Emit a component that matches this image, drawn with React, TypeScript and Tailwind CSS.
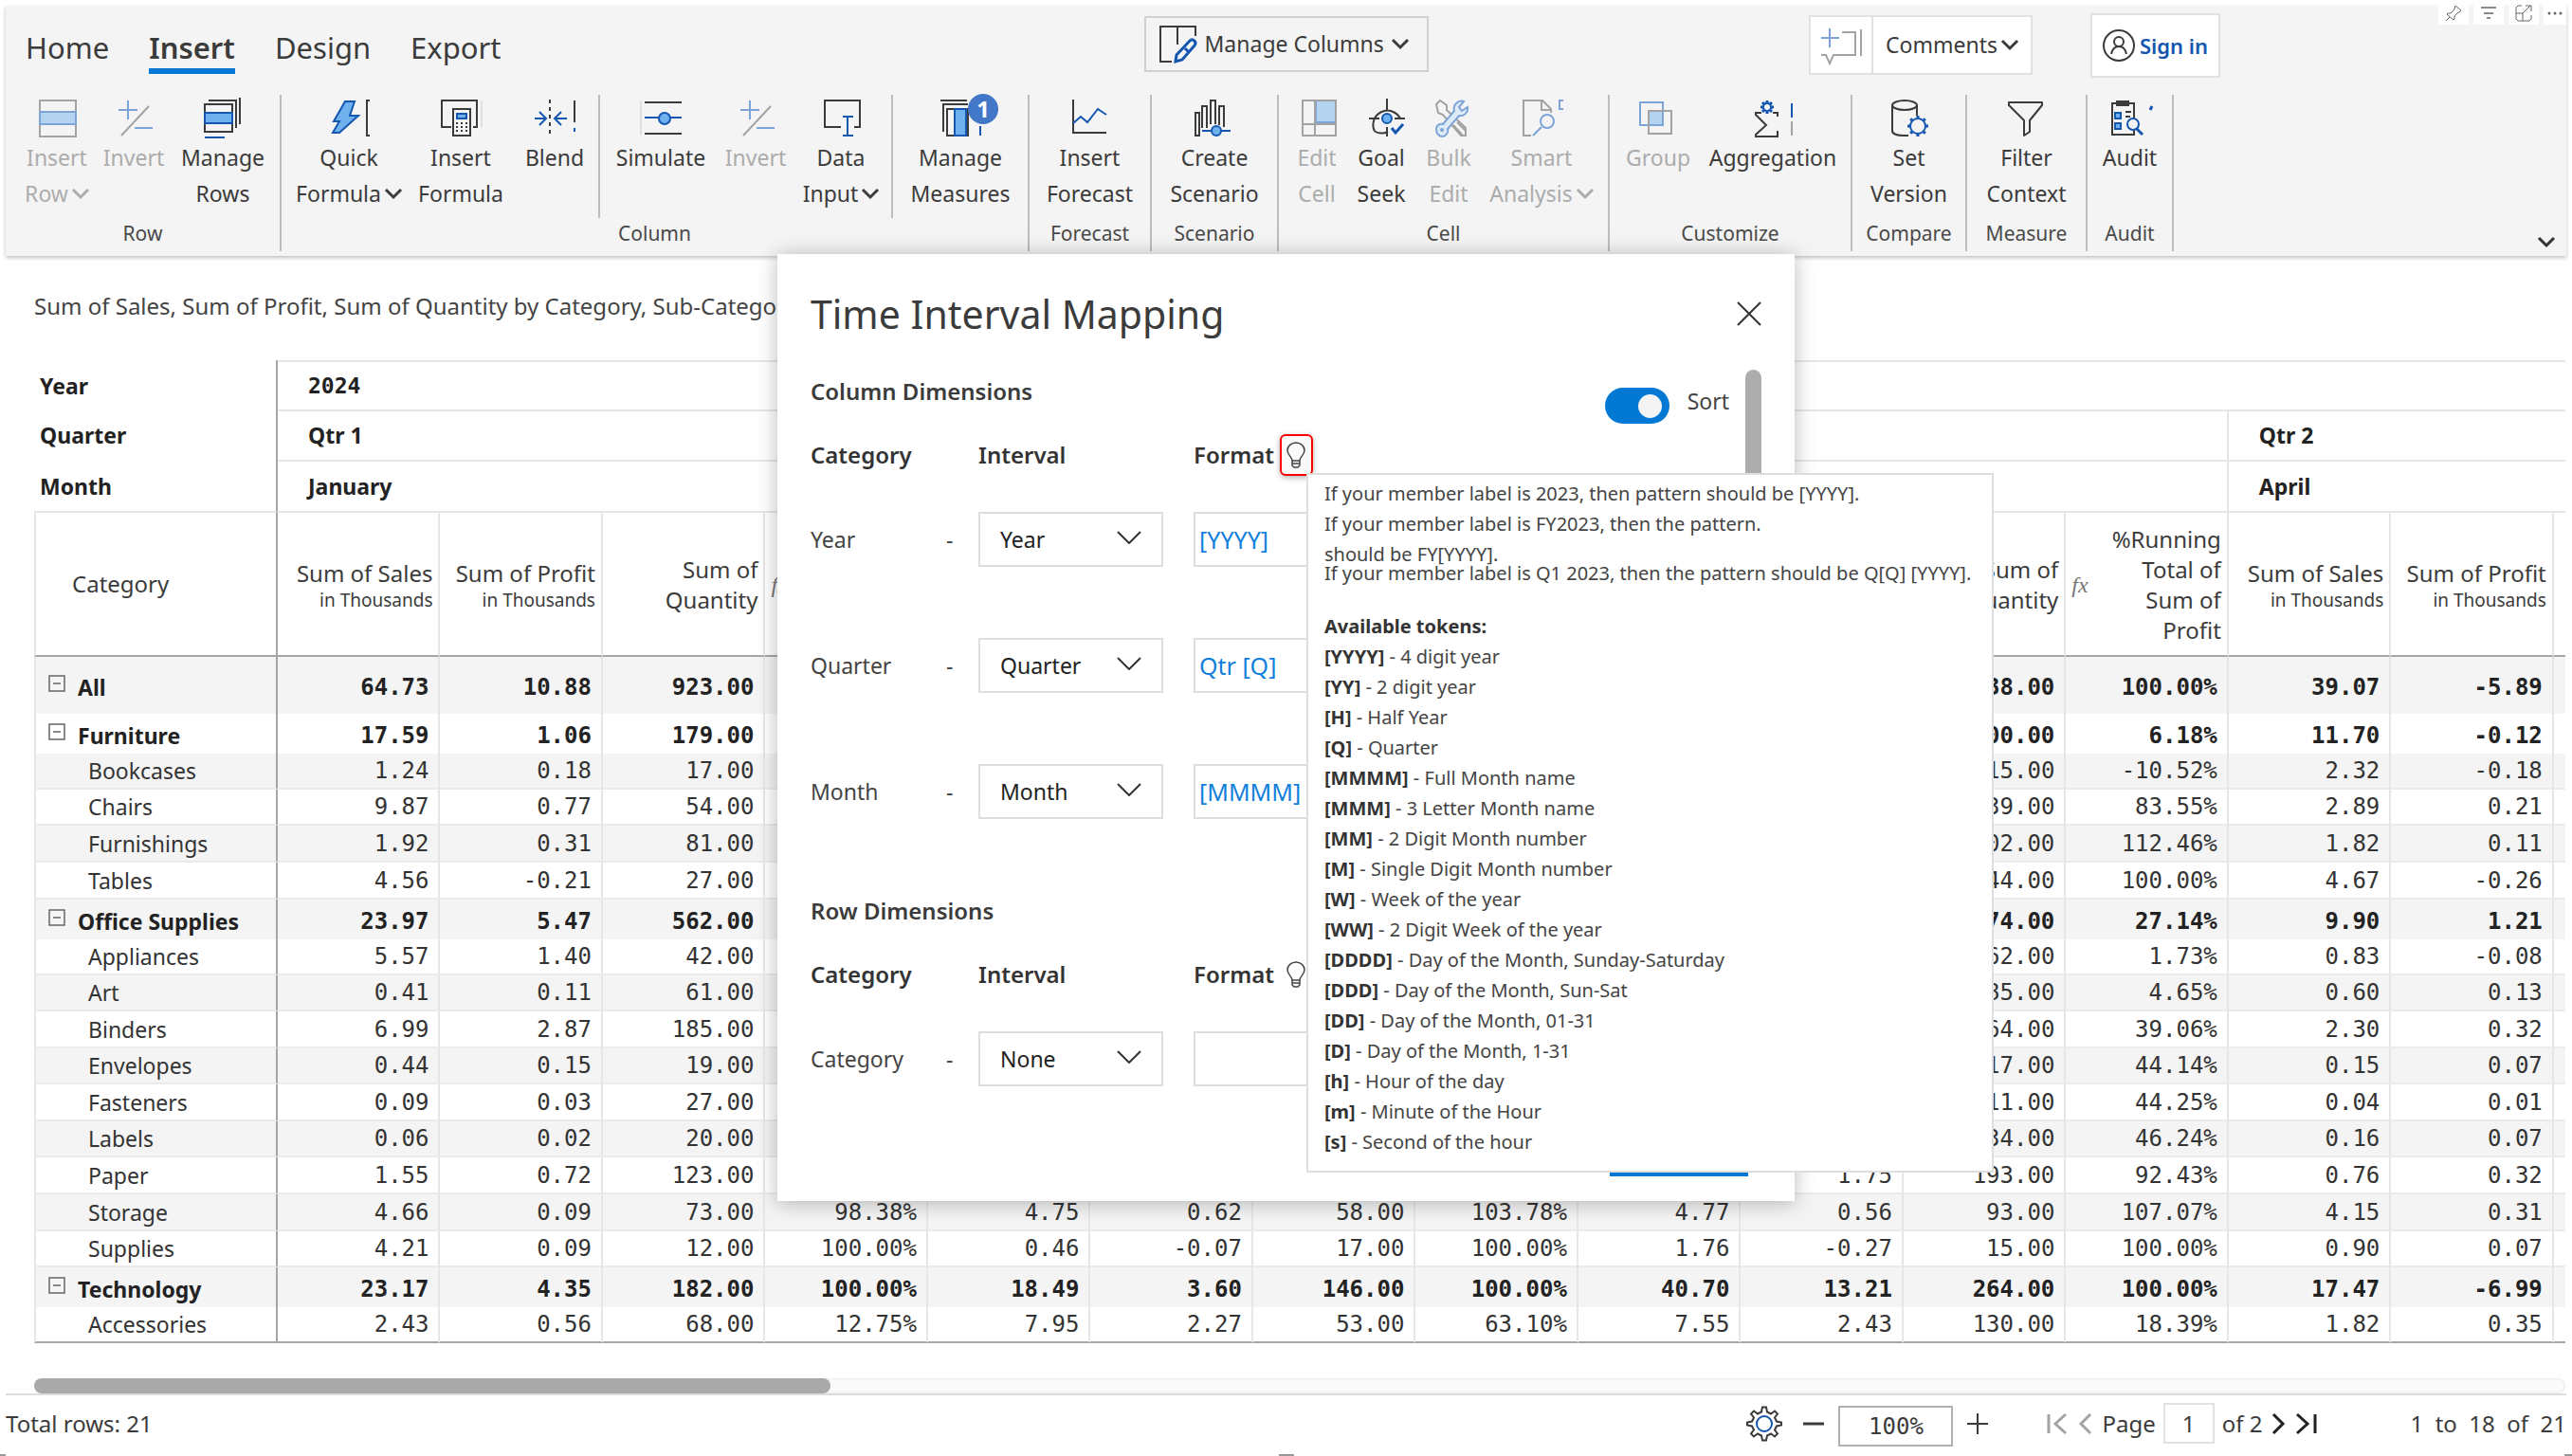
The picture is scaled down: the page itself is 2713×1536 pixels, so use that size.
import React, { useState } from "react";

const INK = "#3b3b3b";
const BLUE = "#1557b0";
const SKY = "#6fb1ee";
const GRAY = "#a3a3a3";
const PALE = "#7da4d6";
const PALE_FILL = "#b3d3f0";

function Icon({ children, width = 40, height = 40 }: { children: React.ReactNode; width?: number; height?: number }) {
  return (
    <svg
      width={width}
      height={height}
      viewBox={`0 0 ${width} ${height}`}
      fill="none"
      stroke={INK}
      strokeWidth="2"
      className="block shrink-0 overflow-visible"
      aria-hidden="true"
    >
      {children}
    </svg>
  );
}

function Chevron() {
  return (
    <svg
      width="18"
      height="11"
      viewBox="0 0 18 11"
      fill="none"
      stroke="currentColor"
      strokeWidth="3"
      className="inline-block shrink-0 overflow-visible"
      aria-hidden="true"
    >
      <path d="M1 1l8 8 8-8" />
    </svg>
  );
}

function Gear({ cx, cy, r, stroke = BLUE, teeth = 8 }: { cx: number; cy: number; r: number; stroke?: string; teeth?: number }) {
  const spokes = Array.from({ length: teeth }, (_, i) => {
    const a = (i * 2 * Math.PI) / teeth;
    return `M${cx + r * Math.cos(a)} ${cy + r * Math.sin(a)}L${cx + (r + 3) * Math.cos(a)} ${cy + (r + 3) * Math.sin(a)}`;
  }).join("");
  return (
    <g stroke={stroke}>
      <circle cx={cx} cy={cy} r={r} />
      <path d={spokes} strokeWidth="3" />
    </g>
  );
}

const insertRowIcon = (
  <Icon>
    <g stroke={GRAY}>
      <rect x="2" y="1" width="38" height="38" fill="#f4f4f4" />
      <rect x="2" y="13" width="38" height="13" fill={PALE_FILL} stroke={PALE} />
    </g>
  </Icon>
);
const invertIcon = (
  <Icon>
    <path d="M14 1v20M4 11h20M21 30h19" stroke={PALE} />
    <path d="M36 7L7 38" stroke={GRAY} />
  </Icon>
);
const manageRowsIcon = (
  <Icon>
    <path d="M5 1h29v29M38-2v28" />
    <rect x="1" y="5" width="29" height="29" />
    <rect x="1" y="14" width="29" height="11" fill={SKY} stroke={BLUE} />
    <path d="M1 40h21" stroke={BLUE} />
  </Icon>
);
const boltIcon = (
  <Icon>
    <path d="M16 2h10l-5 15h9L10 35H3l7-12H4z" fill={SKY} stroke={BLUE} />
    <path d="M42 1h-3v37h3" />
  </Icon>
);
const insertFormulaIcon = (
  <Icon>
    <path d="M10 29H0V1h37v28h-4" />
    <rect x="12" y="10" width="18" height="28" />
    <rect x="16" y="15" width="10" height="5" fill={SKY} stroke={BLUE} />
    <path d="M15 25h12M15 29h12M15 33h12" strokeDasharray="2 3" />
    <path d="M42 1v29" stroke="#cccccc" strokeWidth="1" />
  </Icon>
);
const blendIcon = (
  <Icon>
    <path d="M15 0v40" strokeDasharray="4 4" />
    <path d="M-1 20h11M4 13l7 7-7 7M33 20H20M27 13l-7 7 7 7" stroke={BLUE} />
    <path d="M41 1v23" />
    <path d="M41 30v4" stroke={BLUE} />
  </Icon>
);
const simulateIcon = (
  <Icon>
    <path d="M3 3h39M3 36h39" />
    <path d="M3 19h39" stroke={BLUE} />
    <circle cx="24" cy="20" r="6" fill={SKY} stroke={BLUE} />
    <path d="M-1 1v37" stroke="#cccccc" strokeWidth="1" />
  </Icon>
);
const dataInputIcon = (
  <Icon>
    <path d="M20 29H3V1h37v28h-6" />
    <path d="M27 19v19M22 18h11M22 38h11" stroke={BLUE} />
  </Icon>
);
const manageMeasuresIcon = (
  <Icon>
    <path d="M-1 1h28M2 34V5h26M6 38V10h22v28z" />
    <rect x="14" y="10" width="12" height="28" fill={SKY} stroke={BLUE} />
    <path d="M41 28v10" stroke={BLUE} />
  </Icon>
);
const forecastIcon = (
  <Icon>
    <path d="M2 0v35h35" />
    <path d="M2 25l8-7 7 6 11-14 9 6" stroke={BLUE} />
  </Icon>
);
const scenarioIcon = (
  <Icon>
    <path d="M0 38V14h4v24zM7 30V7h5v23M16 26V1h5v25M25 27V7h5v22" />
    <path d="M7 33h30" stroke={BLUE} />
    <circle cx="22" cy="33" r="5" fill={SKY} stroke={BLUE} />
  </Icon>
);
const editCellIcon = (
  <Icon>
    <rect x="19" y="1" width="21" height="23" fill={PALE_FILL} stroke={PALE} />
    <path d="M40 1H5v37h35zM18 1v37M5 26h35" stroke={GRAY} />
  </Icon>
);
const goalIcon = (
  <Icon>
    <path d="M13 33.500A15 15 0 1 1 40 20M27 34a15 15 0 0 1-14-.5M26-1v12M26 29v10M7 20h11M34 20h11" />
    <circle cx="26" cy="20" r="5" fill={SKY} stroke={BLUE} />
    <path d="M31 30l4 5 8-9" stroke={BLUE} strokeWidth="3" />
  </Icon>
);
const bulkIcon = (
  <Icon>
    <g stroke={GRAY}>
      <path d="M7 5l4-4 7 5 0 5 20 19v8h-5L14 16l-5-2z" fill="#f4f4f4" />
      <path d="M25 27l10 11M29 24l9 9" />
    </g>
    <path
      d="M7 31c0-4 4-6 7-5l12-14c-2-6 4-12 10-10l-5 6 3 4 6-4c1 6-4 10-9 9L19 31c1 4-2 8-6 8-3 0-6-3-6-8z"
      fill="#dfeaf7"
      stroke={PALE}
    />
    <circle cx="13" cy="32" r="1" stroke={PALE} />
  </Icon>
);
const smartIcon = (
  <Icon>
    <path d="M9 38H1V1h20l9 9v4M20 1v10h10" stroke={GRAY} />
    <path d="M20 29l-9 9M43 1h-4v9h4" stroke={PALE} />
    <circle cx="26" cy="23" r="7" stroke={PALE} />
  </Icon>
);
const groupIcon = (
  <Icon>
    <rect x="10" y="12" width="15" height="14" fill={PALE_FILL} stroke="none" />
    <rect x="1" y="3" width="24" height="24" stroke={PALE} />
    <rect x="10" y="12" width="24" height="24" stroke={GRAY} />
  </Icon>
);
const aggregationIcon = (
  <Icon>
    <path d="M25 18v-4h-5M8 14H2v2l11 11L2 37v2h23v-6" />
    <Gear cx={14} cy={8} r={4} />
    <path d="M40 4v15" stroke={BLUE} />
    <path d="M40 23v15" stroke={GRAY} />
  </Icon>
);
const versionIcon = (
  <Icon>
    <ellipse cx="15" cy="6" rx="13" ry="5" />
    <path d="M2 6v27c0 3 5 5 13 5h4M28 6v11" />
    <Gear cx={29} cy={28} r={8} />
  </Icon>
);
const filterIcon = (
  <Icon>
    <path d="M1 3h35v3L23 22v12l-6 4V22L1 6z" strokeLinejoin="round" />
  </Icon>
);
const auditIcon = (
  <Icon>
    <path d="M24 20V4H1v33h23v-5" />
    <rect x="6" y="2" width="12" height="4" fill={INK} />
    <path d="M15 13h6M15 18h5" />
    <rect x="4" y="14" width="6" height="6" fill={SKY} stroke={BLUE} />
    <rect x="4" y="25" width="6" height="6" fill={SKY} stroke={BLUE} />
    <circle cx="23" cy="26" r="6" stroke={BLUE} />
    <path d="M27 31l6 6M41 11l2-4" stroke={BLUE} strokeWidth="3" />
  </Icon>
);

type Tool = { width: string; icon: React.ReactNode; lines: string[]; menu?: boolean; off?: boolean; badge?: string };

function ToolButton({ tool }: { tool: Tool }) {
  return (
    <button
      type="button"
      disabled={tool.off}
      className={`${tool.width} flex shrink-0 flex-col items-center pt-[5px] text-[23px] leading-[38px] whitespace-nowrap ${
        tool.off ? "text-[#acacac]" : "text-[#3b3b3b]"
      }`}
    >
      <span className="relative mb-0.5">
        {tool.icon}
        {tool.badge && (
          <span className="absolute -top-1.5 left-7 flex size-8 items-center justify-center rounded-full bg-[#4377c8] text-2xl font-bold text-white">
            {tool.badge}
          </span>
        )}
      </span>
      {tool.lines.map((line, i) => (
        <span key={line} className="flex items-center gap-1">
          {line}
          {tool.menu && i === tool.lines.length - 1 && <Chevron />}
        </span>
      ))}
    </button>
  );
}

const groups: { name: string; width: string; sections: { className: string; tools: Tool[] }[] }[] = [
  {
    name: "Row",
    width: "w-[291px]",
    sections: [
      {
        className: "w-full pl-[14px]",
        tools: [
          { width: "w-[80px]", icon: insertRowIcon, lines: ["Insert", "Row"], menu: true, off: true },
          { width: "w-[82px]", icon: invertIcon, lines: ["Invert"], off: true },
          { width: "w-[106px]", icon: manageRowsIcon, lines: ["Manage", "Rows"] },
        ],
      },
    ],
  },
  {
    name: "Column",
    width: "w-[789px]",
    sections: [
      {
        className: "w-[336px] border-r-2 pl-[7px]",
        tools: [
          { width: "w-[128px]", icon: boltIcon, lines: ["Quick", "Formula"], menu: true },
          { width: "w-[108px]", icon: insertFormulaIcon, lines: ["Insert", "Formula"] },
          { width: "w-[90px]", icon: blendIcon, lines: ["Blend"] },
        ],
      },
      {
        className: "w-[309px] border-r-2 pl-[7px]",
        tools: [
          { width: "w-[114px]", icon: simulateIcon, lines: ["Simulate"] },
          { width: "w-[86px]", icon: invertIcon, lines: ["Invert"], off: true },
          { width: "w-[94px]", icon: dataInputIcon, lines: ["Data", "Input"], menu: true },
        ],
      },
      {
        className: "flex-1",
        tools: [{ width: "w-full", icon: manageMeasuresIcon, lines: ["Manage", "Measures"], badge: "1" }],
      },
    ],
  },
  {
    name: "Forecast",
    width: "w-[129px]",
    sections: [{ className: "w-full", tools: [{ width: "w-full", icon: forecastIcon, lines: ["Insert", "Forecast"] }] }],
  },
  {
    name: "Scenario",
    width: "w-[134px]",
    sections: [{ className: "w-full", tools: [{ width: "w-full", icon: scenarioIcon, lines: ["Create", "Scenario"] }] }],
  },
  {
    name: "Cell",
    width: "w-[349px]",
    sections: [
      {
        className: "w-full pl-[12px]",
        tools: [
          { width: "w-[56px]", icon: editCellIcon, lines: ["Edit", "Cell"], off: true },
          { width: "w-[80px]", icon: goalIcon, lines: ["Goal", "Seek"] },
          { width: "w-[62px]", icon: bulkIcon, lines: ["Bulk", "Edit"], off: true },
          { width: "w-[134px]", icon: smartIcon, lines: ["Smart", "Analysis"], menu: true, off: true },
        ],
      },
    ],
  },
  {
    name: "Customize",
    width: "w-[256px]",
    sections: [
      {
        className: "w-full pl-[7px]",
        tools: [
          { width: "w-[88px]", icon: groupIcon, lines: ["Group"], off: true },
          { width: "w-[154px]", icon: aggregationIcon, lines: ["Aggregation"] },
        ],
      },
    ],
  },
  {
    name: "Compare",
    width: "w-[121px]",
    sections: [{ className: "w-full", tools: [{ width: "w-full", icon: versionIcon, lines: ["Set", "Version"] }] }],
  },
  {
    name: "Measure",
    width: "w-[127px]",
    sections: [{ className: "w-full", tools: [{ width: "w-full", icon: filterIcon, lines: ["Filter", "Context"] }] }],
  },
  {
    name: "Audit",
    width: "w-[91px]",
    sections: [{ className: "w-full", tools: [{ width: "w-full", icon: auditIcon, lines: ["Audit"] }] }],
  },
];

function Ribbon() {
  return (
    <header className="relative mx-1.5 bg-[#f4f4f4] shadow-[0_2px_4px_rgba(0,0,0,0.25)]">
      <div className="grid h-[94px] grid-cols-[1fr_auto_1fr] items-start">
        <nav className="flex gap-[42px] pt-[22px] pl-[21px] text-[31px] leading-[44px] text-[#3b3b3b]">
          <a href="#home">Home</a>
          <a href="#insert" aria-current="page" className="border-b-6 border-[#0078d4] font-semibold">
            Insert
          </a>
          <a href="#design">Design</a>
          <a href="#export">Export</a>
        </nav>
        <button
          type="button"
          className="mt-[11px] flex h-[59px] w-[300px] items-center border-2 border-[#d0d0d0] pl-3 text-[23px] text-[#3b3b3b]"
        >
          <Icon>
            <path d="M15 38H3V1h37v10M21 1v19" />
            <path d="M19 38l1-7 14-15c3-3 8 1 5 5L26 36zM29 24l4 4" stroke={BLUE} strokeWidth="3" />
          </Icon>
          <span className="mr-2 ml-2.5">Manage Columns</span>
          <Chevron />
        </button>
        <div className="flex items-start justify-end pt-2 pr-[365px]">
          <div className="mt-[2px] flex h-[63px] w-[236px] border-2 border-[#e1e1e1] bg-white text-[23px] text-[#3b3b3b]">
            <button type="button" aria-label="Add comment" className="flex w-[66px] items-center border-r-2 border-[#e1e1e1] pl-2.5">
              <Icon width={44}>
                <path d="M23 6h14v24H14l-4 9-4-9H1M43 3v28" stroke={GRAY} />
                <path d="M10 2v20M1 12h19" stroke={PALE} />
              </Icon>
            </button>
            <button type="button" className="flex flex-1 items-center justify-center gap-1">
              Comments
              <Chevron />
            </button>
          </div>
          <button
            type="button"
            className="ml-[61px] flex h-[68px] w-[137px] items-center gap-1 border-2 border-[#e1e1e1] bg-white pl-2.5 text-[22px] font-semibold whitespace-nowrap text-[#1557b0]"
          >
            <Icon width={36} height={36}>
              <circle cx="18" cy="18" r="16" />
              <circle cx="18" cy="14" r="5" />
              <path d="M10 27c1-5 4-8 8-8s7 3 8 8" />
            </Icon>
            Sign in
          </button>
        </div>
      </div>

      <div className="flex h-[170px]">
        {groups.map((g) => (
          <section key={g.name} aria-label={g.name} className={`${g.width} h-[165px] shrink-0 border-r-2 border-[#bdbdbd]`}>
            <div className="flex h-[130px]">
              {g.sections.map((s, i) => (
                <div key={i} className={`${s.className} flex border-[#bdbdbd]`}>
                  {s.tools.map((t, j) => (
                    <ToolButton key={j} tool={t} />
                  ))}
                </div>
              ))}
            </div>
            <p className="text-center text-[21px] leading-8 text-[#4a4a4a]">{g.name}</p>
          </section>
        ))}
        <button type="button" aria-label="Collapse ribbon" className="mt-auto mr-3 mb-1 ml-auto text-[#333333]">
          <Chevron />
        </button>
      </div>

      <div className="absolute -top-1 right-0 flex gap-[5px]">
        <button type="button" aria-label="Pin" className="flex h-6 w-8 items-center justify-center bg-white">
          <svg width="18" height="18" viewBox="0 0 18 18" fill="none" stroke="#666" aria-hidden="true">
            <path d="M11 1l6 5-2 2-1 0-4 4v3l-1 1-7-6 1-1 3 0 4-4 0-1zM5 13l-4 4" />
          </svg>
        </button>
        <button type="button" aria-label="Filters" className="flex h-6 w-8 items-center justify-center bg-white">
          <svg width="18" height="16" viewBox="0 0 18 16" fill="none" stroke="#666" strokeWidth="1.500" aria-hidden="true">
            <path d="M1 2h16M4 8h10M7 13h4" />
          </svg>
        </button>
        <button type="button" aria-label="Focus mode" className="flex h-6 w-8 items-center justify-center bg-white">
          <svg width="18" height="18" viewBox="0 0 18 18" fill="none" stroke="#666" aria-hidden="true">
            <path d="M7 1H3L1 3v12l2 2h12l2-2v-4M1 9h7v8M8 9l8-8M11 1h6v6" />
          </svg>
        </button>
        <button type="button" aria-label="More options" className="flex h-6 w-6 items-center justify-center bg-white">
          <svg width="16" height="4" viewBox="0 0 16 4" fill="#666" aria-hidden="true">
            <circle cx="2" cy="2" r="1.500" />
            <circle cx="8" cy="2" r="1.500" />
            <circle cx="14" cy="2" r="1.500" />
          </svg>
        </button>
      </div>
    </header>
  );
}

type Row = { name: string; total?: boolean; height: string; values: string[] };

const blank = ["", "", "", "", "", "", ""];
const row = (name: string, height: string, values: string[], total = false): Row => ({ name, height, values, total });

const rows: Row[] = [
  row("All", "h-[60px]", ["64.73", "10.88", "923.00", ...blank, "1038.00", "100.00%", "39.07", "-5.89"], true),
  row("Furniture", "h-[42px]", ["17.59", "1.06", "179.00", ...blank, "200.00", "6.18%", "11.70", "-0.12"], true),
  row("Bookcases", "h-[38px]", ["1.24", "0.18", "17.00", ...blank, "15.00", "-10.52%", "2.32", "-0.18"]),
  row("Chairs", "h-[38px]", ["9.87", "0.77", "54.00", ...blank, "39.00", "83.55%", "2.89", "0.21"]),
  row("Furnishings", "h-[39px]", ["1.92", "0.31", "81.00", ...blank, "102.00", "112.46%", "1.82", "0.11"]),
  row("Tables", "h-[39px]", ["4.56", "-0.21", "27.00", ...blank, "44.00", "100.00%", "4.67", "-0.26"]),
  row("Office Supplies", "h-[42px]", ["23.97", "5.47", "562.00", ...blank, "574.00", "27.14%", "9.90", "1.21"], true),
  row("Appliances", "h-[38px]", ["5.57", "1.40", "42.00", ...blank, "62.00", "1.73%", "0.83", "-0.08"]),
  row("Art", "h-[38px]", ["0.41", "0.11", "61.00", ...blank, "85.00", "4.65%", "0.60", "0.13"]),
  row("Binders", "h-[39px]", ["6.99", "2.87", "185.00", ...blank, "64.00", "39.06%", "2.30", "0.32"]),
  row("Envelopes", "h-[38px]", ["0.44", "0.15", "19.00", ...blank, "17.00", "44.14%", "0.15", "0.07"]),
  row("Fasteners", "h-[39px]", ["0.09", "0.03", "27.00", ...blank, "11.00", "44.25%", "0.04", "0.01"]),
  row("Labels", "h-[38px]", ["0.06", "0.02", "20.00", ...blank, "34.00", "46.24%", "0.16", "0.07"]),
  row("Paper", "h-[39px]", ["1.55", "0.72", "123.00", "", "", "", "", "", "", "1.75", "193.00", "92.43%", "0.76", "0.32"]),
  row("Storage", "h-[39px]", ["4.66", "0.09", "73.00", "98.38%", "4.75", "0.62", "58.00", "103.78%", "4.77", "0.56", "93.00", "107.07%", "4.15", "0.31"]),
  row("Supplies", "h-[38px]", ["4.21", "0.09", "12.00", "100.00%", "0.46", "-0.07", "17.00", "100.00%", "1.76", "-0.27", "15.00", "100.00%", "0.90", "0.07"]),
  row("Technology", "h-[42px]", ["23.17", "4.35", "182.00", "100.00%", "18.49", "3.60", "146.00", "100.00%", "40.70", "13.21", "264.00", "100.00%", "17.47", "-6.99"], true),
  row("Accessories", "h-[38px]", ["2.43", "0.56", "68.00", "12.75%", "7.95", "2.27", "53.00", "63.10%", "7.55", "2.43", "130.00", "18.39%", "1.82", "0.35"]),
];

function MeasureHeader({ index }: { index: number }) {
  const kind = index % 4;
  if (kind < 2) {
    return (
      <>
        {kind === 0 ? "Sum of Sales" : "Sum of Profit"}
        <span className="block text-[19px] leading-6">in Thousands</span>
      </>
    );
  }
  if (kind === 2) {
    return (
      <>
        Sum of
        <br />
        Quantity
      </>
    );
  }
  return (
    <span className="flex items-center justify-between">
      <i className="font-['Liberation_Serif',serif] text-[24px] text-[#777777]">fx</i>
      <span>
        %Running
        <br />
        Total of
        <br />
        Sum of
        <br />
        Profit
      </span>
    </span>
  );
}

function Matrix() {
  return (
    <table className="w-full table-fixed border-separate border-spacing-0 text-[23px] text-[#333333]">
      <colgroup>
        <col className="w-[257px]" />
        {Array.from({ length: 14 }, (_, i) => (
          <col key={i} />
        ))}
        <col className="w-[12px]" />
      </colgroup>
      <thead className="text-left text-[#222222]">
        <tr className="h-[52px]">
          <th scope="row" className="border-r-2 border-[#a6a6a6] pt-0.5 pl-[6px]">Year</th>
          <th colSpan={15} className="border-t-2 border-[#e6e6e6] pl-8 font-['DejaVu_Sans_Mono',monospace] text-[23px]">2024</th>
        </tr>
        <tr className="h-[53px]">
          <th scope="row" className="border-r-2 border-[#a6a6a6] pt-0.5 pl-[6px]">Quarter</th>
          <th colSpan={12} className="border-t-2 border-r-2 border-[#e6e6e6] pl-8">Qtr 1</th>
          <th colSpan={3} className="border-t-2 border-[#e6e6e6] pl-8">Qtr 2</th>
        </tr>
        <tr className="h-[54px]">
          <th scope="row" className="border-r-2 border-[#a6a6a6] pt-0.5 pl-[6px]">Month</th>
          <th colSpan={4} className="border-t-2 border-r-2 border-[#e6e6e6] pl-8">January</th>
          <th colSpan={4} className="border-t-2 border-r-2 border-[#e6e6e6]"></th>
          <th colSpan={4} className="border-t-2 border-r-2 border-[#e6e6e6]"></th>
          <th colSpan={3} className="border-t-2 border-[#e6e6e6] pl-8">April</th>
        </tr>
        <tr className="h-[154px] text-[24px] text-[#3b3b3b]">
          <th
            scope="col"
            className="border-t-2 border-r-2 border-b-2 border-l-2 border-t-[#e6e6e6] border-r-[#a6a6a6] border-b-[#a6a6a6] border-l-[#e6e6e6] pl-[38px] font-normal"
          >
            Category
          </th>
          {Array.from({ length: 14 }, (_, i) => (
            <th
              key={i}
              scope="col"
              className="border-t-2 border-r-2 border-b-2 border-t-[#e6e6e6] border-r-[#e6e6e6] border-b-[#a6a6a6] pt-0.5 pr-1.5 pl-1.5 text-right leading-8 font-normal"
            >
              <MeasureHeader index={i} />
            </th>
          ))}
          <th aria-hidden="true" className="border-t-2 border-b-2 border-t-[#e6e6e6] border-b-[#a6a6a6]"></th>
        </tr>
      </thead>
      <tbody>
        {rows.map((r, i) => {
          const last = i === rows.length - 1;
          const line = last ? "border-b-2 border-b-[#a6a6a6]" : r.total ? "" : "border-b-2 border-b-[#ebebeb]";
          const pad = r.total ? "pt-1" : "pt-0";
          return (
            <tr
              key={r.name}
              className={`${r.height} ${i % 2 ? "bg-white" : "bg-[#f4f4f4]"} ${r.total ? "font-bold text-[#222222]" : ""} leading-8`}
            >
              <th
                scope="row"
                className={`${line} ${pad} border-r-2 border-l-2 border-r-[#a6a6a6] border-l-[#e6e6e6] pr-0 pb-0 text-left ${r.total ? "pl-0 font-bold" : "pl-[55px] font-normal"}`}
              >
                <span className="flex items-center">
                  {r.total && (
                    <button type="button" aria-label={`Collapse ${r.name}`} className="mr-[13px] mb-2 ml-[13px]">
                      <svg width="18" height="18" viewBox="0 0 18 18" fill="none" stroke="#666666" strokeWidth="1.500" className="block" aria-hidden="true">
                        <path d="M1 1h16v16H1zM5 9h8" />
                      </svg>
                    </button>
                  )}
                  {r.name}
                </span>
              </th>
              {r.values.map((v, j) => (
                <td
                  key={j}
                  className={`${line} ${pad} border-r-2 border-r-[#e6e6e6] pr-2.5 pb-0 pl-0 text-right font-['DejaVu_Sans_Mono',monospace] text-[24px]`}
                >
                  {v}
                </td>
              ))}
              <td className={line}></td>
            </tr>
          );
        })}
      </tbody>
    </table>
  );
}

const tokens = [
  ["[YYYY]", "4 digit year"],
  ["[YY]", "2 digit year"],
  ["[H]", "Half Year"],
  ["[Q]", "Quarter"],
  ["[MMMM]", "Full Month name"],
  ["[MMM]", "3 Letter Month name"],
  ["[MM]", "2 Digit Month number"],
  ["[M]", "Single Digit Month number"],
  ["[W]", "Week of the year"],
  ["[WW]", "2 Digit Week of the year"],
  ["[DDDD]", "Day of the Month, Sunday-Saturday"],
  ["[DDD]", "Day of the Month, Sun-Sat"],
  ["[DD]", "Day of the Month, 01-31"],
  ["[D]", "Day of the Month, 1-31"],
  ["[h]", "Hour of the day"],
  ["[m]", "Minute of the Hour"],
  ["[s]", "Second of the hour"],
];

function Bulb() {
  return (
    <svg width="20" height="28" viewBox="0 0 20 28" fill="none" stroke="#444444" strokeWidth="1.500" aria-hidden="true">
      <path d="M6 20c0-4-5-6-5-11a9 8 0 0 1 18 0c0 5-5 7-5 11zM6 20v5l2 2h4l2-2v-5M6 23h8" />
    </svg>
  );
}

function FormatHelp() {
  return (
    <div
      role="tooltip"
      className="absolute top-[41px] left-[28px] z-10 h-[738px] w-[725px] border-2 border-[#dedede] bg-white pt-1 pl-[17px] text-[20px] leading-8 font-normal whitespace-nowrap text-[#444444]"
    >
      <p>If your member label is 2023, then pattern should be [YYYY].</p>
      <p>If your member label is FY2023, then the pattern.</p>
      <p>should be FY[YYYY].</p>
      <p className="-mt-3">If your member label is Q1 2023, then the pattern should be Q[Q] [YYYY].</p>
      <p className="mt-6 font-bold text-[#333333]">Available tokens:</p>
      <ul>
        {tokens.map(([token, text]) => (
          <li key={token}>
            <b className="text-[#333333]">{token}</b> - {text}
          </li>
        ))}
      </ul>
    </div>
  );
}

const columns = "grid grid-cols-[143px_34px_227px_1fr] items-center";

function DimensionHeadings({ help }: { help?: boolean }) {
  return (
    <div className={`${columns} h-11 text-[24px] font-semibold text-[#333333]`}>
      <span>Category</span>
      <span></span>
      <span>Interval</span>
      <span className="flex items-center gap-1.5">
        Format
        <span className="relative">
          <button
            type="button"
            aria-label="Format help"
            className={`flex h-11 w-[35px] items-center justify-center rounded-md border-2 ${
              help ? "border-[#ff0000] bg-[#fafafa] shadow-[0_2px_6px_rgba(0,0,0,0.3)]" : "border-transparent"
            }`}
          >
            <Bulb />
          </button>
          {help && <FormatHelp />}
        </span>
      </span>
    </div>
  );
}

function DimensionRow({ label, interval, format }: { label: string; interval: string; format: string }) {
  return (
    <div className={`${columns} h-[58px] text-[23px] text-[#444444]`}>
      <label htmlFor={`interval-${label}`}>{label}</label>
      <span>-</span>
      <span className="relative w-[195px]">
        <select
          id={`interval-${label}`}
          defaultValue={interval}
          className="h-[58px] w-full appearance-none border-2 border-[#dedede] bg-white pl-[21px] text-[#222222]"
        >
          {["None", "Year", "Quarter", "Month"].map((o) => (
            <option key={o}>{o}</option>
          ))}
        </select>
        <svg width="26" height="14" viewBox="0 0 26 14" fill="none" stroke="#333333" strokeWidth="2" className="pointer-events-none absolute top-[20px] right-[23px]" aria-hidden="true">
          <path d="M1 1l12 12L25 1" />
        </svg>
      </span>
      <input
        aria-label={`${label} format`}
        defaultValue={format}
        className="h-[58px] w-[300px] border-2 border-[#dedede] bg-white pl-1 text-[25px] text-[#0f80dc]"
      />
    </div>
  );
}

function TimeIntervalDialog() {
  const [sorted, setSorted] = useState(true);
  return (
    <div className="pointer-events-none absolute inset-x-0 top-[268px] flex justify-center">
      <div
        role="dialog"
        aria-labelledby="dialog-title"
        className="pointer-events-auto relative h-[999px] w-[1073px] bg-white pl-[35px] shadow-[0_2px_20px_rgba(0,0,0,0.28)]"
      >
        <div className="flex items-center justify-between pt-8 pr-[35px]">
          <h2 id="dialog-title" className="text-[41px] leading-[62px] text-[#3b3b3b]">
            Time Interval Mapping
          </h2>
          <button type="button" aria-label="Close">
            <svg width="26" height="26" viewBox="0 0 26 26" fill="none" stroke="#333333" strokeWidth="2" aria-hidden="true">
              <path d="M1 1l24 24M25 1L1 25" />
            </svg>
          </button>
        </div>
        <div className="mt-7 flex">
          <div className="flex-1">
            <div className="flex h-[58px] items-start justify-between pr-[17px]">
              <h3 className="pt-[7px] text-[24px] leading-8 font-semibold text-[#3b3b3b]">Column Dimensions</h3>
              <label className="flex items-start text-[23px] leading-8 text-[#444444]">
                <input type="checkbox" role="switch" checked={sorted} onChange={() => setSorted(!sorted)} className="peer sr-only" />
                <span className="mt-[19px] mr-[19px] flex h-[38px] w-[68px] items-center justify-end rounded-full bg-[#0078d4] pr-2">
                  <span className="size-[25px] rounded-full bg-[#f4f4f4]"></span>
                </span>
                <span className="mt-[17px]">Sort</span>
              </label>
            </div>
            <div className="mt-[10px]">
              <DimensionHeadings help />
            </div>
            <div className="mt-[38px] flex flex-col gap-[75px]">
              <DimensionRow label="Year" interval="Year" format="[YYYY]" />
              <DimensionRow label="Quarter" interval="Quarter" format="Qtr [Q]" />
              <DimensionRow label="Month" interval="Month" format="[MMMM]" />
            </div>
            <h3 className="mt-[81px] text-[24px] leading-8 font-semibold text-[#3b3b3b]">Row Dimensions</h3>
            <div className="mt-[29px]">
              <DimensionHeadings />
            </div>
            <div className="mt-[38px]">
              <DimensionRow label="Category" interval="None" format="" />
            </div>
          </div>
          <div className="mr-[35px] h-[420px] w-[17px] rounded-full bg-[#adadad]"></div>
        </div>
        <button type="button" aria-label="Save" className="absolute right-[49px] bottom-[26px] h-[56px] w-[146px] bg-[#0078d4]"></button>
      </div>
    </div>
  );
}

function Footer() {
  return (
    <footer className="mx-1.5 flex h-[61px] items-center border-t-2 border-[#dcdcdc] text-[24px] whitespace-nowrap text-[#3b3b3b]">
      <span className="mr-auto">Total rows: 21</span>
      <button type="button" aria-label="Settings" className="mr-[23px]">
        <Icon width={36} height={36}>
          <path
            d="M16 1h4l1 5 4 2 4-3 3 3-3 4 2 4 5 1v3l-5 1-2 4 3 4-3 3-4-3-4 2-1 5h-4l-1-5-4-2-4 3-3-3 3-4-2-4-5-1v-3l5-1 2-4-3-4 3-3 4 3 4-2z"
            transform="translate(0 -.5)"
          />
          <circle cx="18" cy="18" r="8" stroke={BLUE} />
        </Icon>
      </button>
      <button type="button" aria-label="Zoom out">
        <Icon width={22} height={22}>
          <path d="M0 11h22" strokeWidth="3" />
        </Icon>
      </button>
      <input
        aria-label="Zoom level"
        defaultValue="100%"
        className="mx-[15px] mt-1.5 h-[43px] w-[121px] border-2 border-[#b0b0b0] bg-white text-center font-['DejaVu_Sans_Mono',monospace] text-[24px]"
      />
      <button type="button" aria-label="Zoom in">
        <Icon width={22} height={22}>
          <path d="M0 11h22M11 0v22" />
        </Icon>
      </button>
      <button type="button" aria-label="First page" disabled className="ml-[62px]">
        <Icon width={22} height={22}>
          <path d="M2 1v20M20 1L9 11l11 10" stroke={GRAY} strokeWidth="3" />
        </Icon>
      </button>
      <button type="button" aria-label="Previous page" disabled className="ml-3">
        <Icon width={14} height={22}>
          <path d="M12 1L2 11l10 10" stroke={GRAY} strokeWidth="3" />
        </Icon>
      </button>
      <label htmlFor="page" className="ml-[10px]">Page</label>
      <input id="page" defaultValue="1" className="mr-2 ml-2 h-[43px] w-[54px] border-2 border-[#e1e1e1] bg-white text-center" />
      <span>of 2</span>
      <button type="button" aria-label="Next page" className="ml-2.5">
        <Icon width={14} height={22}>
          <path d="M2 1l10 10L2 21" stroke="#222222" strokeWidth="3" />
        </Icon>
      </button>
      <button type="button" aria-label="Last page" className="ml-3">
        <Icon width={22} height={22}>
          <path d="M1 1l11 10L1 21M20 1v20" stroke="#222222" strokeWidth="3" />
        </Icon>
      </button>
      <span className="ml-[98px]">1&nbsp; to&nbsp; 18&nbsp; of&nbsp; 21</span>
    </footer>
  );
}

export default function App() {
  return (
    <main className="relative flex min-h-screen w-full flex-col overflow-hidden bg-white pt-1.5 font-['Noto_Sans',sans-serif]">
      <Ribbon />
      <section className="pt-[37px] pr-[7px] pl-9">
        <h1 className="mb-[41px] text-[24px] leading-8 text-[#444444]">
          Sum of Sales, Sum of Profit, Sum of Quantity by Category, Sub-Category
        </h1>
        <Matrix />
        <div className="mt-[37px] h-4 rounded-full bg-[#fafafa] shadow-[inset_0_0_3px_rgba(0,0,0,0.12)]">
          <div className="h-4 w-[840px] rounded-full bg-[#a9a9a9]"></div>
        </div>
      </section>
      <Footer />
      <TimeIntervalDialog />
      <span className="absolute bottom-0 left-0 h-0.5 w-1.5 bg-[#999999]"></span>
      <span className="absolute bottom-0 left-1/2 h-0.5 w-4 -translate-x-1/2 bg-[#999999]"></span>
      <span className="absolute right-0 bottom-0 h-0.5 w-2 bg-[#999999]"></span>
    </main>
  );
}
